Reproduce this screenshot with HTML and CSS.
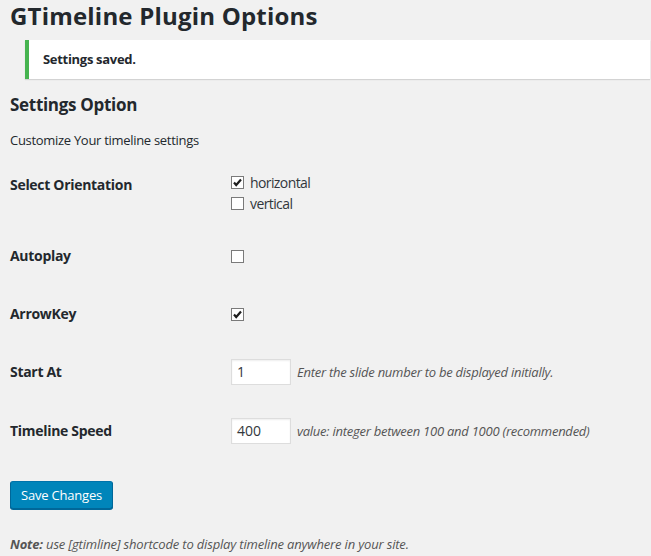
FILE: index.html
```html
<!DOCTYPE html>
<html>
<head>
<meta charset="utf-8">
<link rel="stylesheet" href="styles.css">
</head>
<body>
<div class="wrap">
  <h1 class="title">GTimeline Plugin Options</h1>
  <div class="notice"><strong>Settings saved.</strong></div>
  <h2 class="section">Settings Option</h2>
  <p class="intro">Customize Your timeline settings</p>
  <div class="form">
    <div class="th r1">Select Orientation</div>
    <div class="td r1 td-multi">
      <div class="opt"><span class="cb"><svg viewBox="0 0 13 13" width="13" height="13"><path d="M3 6.5 L5.2 9 L10 3.5" fill="none" stroke="#1e1e1e" stroke-width="2.2"/></svg></span><span>horizontal</span></div>
      <div class="opt"><span class="cb"></span><span>vertical</span></div>
    </div>
    <div class="th">Autoplay</div>
    <div class="td td-single"><span class="cb"></span></div>
    <div class="th">ArrowKey</div>
    <div class="td td-single"><span class="cb"><svg viewBox="0 0 13 13" width="13" height="13"><path d="M3 6.5 L5.2 9 L10 3.5" fill="none" stroke="#1e1e1e" stroke-width="2.2"/></svg></span></div>
    <div class="th">Start At</div>
    <div class="td td-input"><span class="input">1</span><span class="desc">Enter the slide number to be displayed initially.</span></div>
    <div class="th">Timeline Speed</div>
    <div class="td td-input"><span class="input">400</span><span class="desc">value: integer between 100 and 1000 (recommended)</span></div>
  </div>
  <button class="btn">Save Changes</button>
  <p class="note"><strong>Note:</strong> use [gtimline] shortcode to display timeline anywhere in your site.</p>
</div>
</body>
</html>
```

FILE: styles.css
```css
html, body {
  margin: 0;
  padding: 0;
  background: #f1f1f1;
}
body {
  font-family: "Open Sans", "Noto Sans", sans-serif;
  font-size: 13px;
  color: #23282d;
}
.wrap {
  padding: 1px 1px 0 10px;
}
.title {
  margin: 0;
  font-size: 24px;
  line-height: 30px;
  font-weight: 700;
  letter-spacing: 0.2px;
}
.notice {
  margin: 9px 0 0 15px;
  background: #fff;
  border-left: 4px solid #46b450;
  box-shadow: 0 1px 1px 0 rgba(0, 0, 0, 0.12);
  padding: 10px 12px 10px 14px;
  line-height: 19px;
  font-size: 13px;
  letter-spacing: -0.3px;
}
.section {
  margin: 15px 0 0;
  font-size: 17px;
  line-height: 22px;
  font-weight: 700;
  letter-spacing: -0.3px;
}
.intro {
  margin: 15px 0 0;
  line-height: 18px;
  letter-spacing: -0.3px;
}
.form {
  margin-top: 8px;
  display: grid;
  grid-template-columns: 221px 1fr;
  grid-template-rows: 71px 58px 58px 59px 60px;
}
.th {
  padding-top: 19px;
  line-height: 17px;
  font-size: 14px;
  font-weight: 700;
  letter-spacing: -0.3px;
}
.td-multi {
  padding-top: 15px;
}
.opt {
  display: flex;
  align-items: center;
  gap: 6px;
  height: 21px;
  font-size: 14px;
  letter-spacing: -0.6px;
  color: #32373c;
}
.td-single {
  padding-top: 20px;
  height: 17px;
  display: flex;
  align-items: center;
}
.cb {
  box-sizing: border-box;
  width: 13px;
  height: 13px;
  border: 1px solid #7a7a7a;
  background: #fff;
  display: inline-flex;
  align-items: center;
  justify-content: center;
  position: relative;
}
.cb svg {
  position: absolute;
  left: -1px;
  top: -1px;
}
.td-input {
  padding-top: 15px;
  display: flex;
  align-items: flex-start;
  gap: 6px;
}
.input {
  box-sizing: border-box;
  width: 60px;
  height: 26px;
  background: #fff;
  border: 1px solid #ddd;
  box-shadow: inset 0 1px 2px rgba(0, 0, 0, 0.07);
  padding: 0 5px;
  line-height: 24px;
  font-size: 14px;
  color: #32373c;
}
.desc {
  font-style: italic;
  color: #555;
  line-height: 26px;
  font-size: 13px;
  letter-spacing: -0.25px;
}
.btn {
  display: block;
  margin-top: 18px;
  height: 28px;
  padding: 0 10px;
  background: #0085ba;
  border: 1px solid #0073aa;
  border-color: #0073aa #006799 #006799;
  border-radius: 3px;
  box-shadow: 0 1px 0 #006799;
  color: #fff;
  font-family: "Open Sans", "Noto Sans", sans-serif;
  font-size: 13px;
  line-height: 26px;
  letter-spacing: -0.2px;
}
.note {
  margin: 26px 0 0;
  line-height: 18px;
  font-style: italic;
  color: #555;
  letter-spacing: -0.17px;
}
```
